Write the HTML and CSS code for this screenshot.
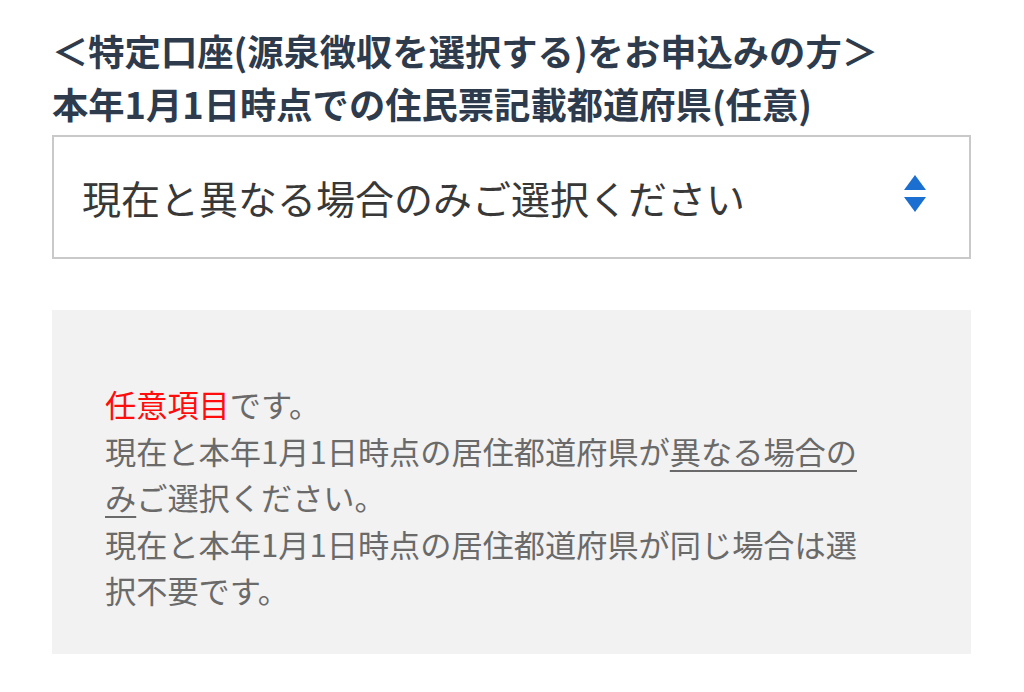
FILE: index.html
```html
<!DOCTYPE html>
<html lang="ja">
<head>
<meta charset="utf-8">
<link rel="stylesheet" href="styles.css">
</head>
<body>
<div class="page">
  <h2 class="title">＜特定口座(源泉徴収を選択する)をお申込みの方＞<br>本年1月1日時点での住民票記載都道府県(任意)</h2>
  <div class="select">
    <span class="select-text">現在と異なる場合のみご選択ください</span>
    <svg class="arrows" width="24" height="38" viewBox="0 0 24 38">
      <polygon points="12,0 23,15 1,15" fill="#1b6fd1"/>
      <polygon points="1,22 23,22 12,37" fill="#1b6fd1"/>
    </svg>
  </div>
  <div class="note">
    <p class="note-text"><span class="red">任意項目</span>です。<br>現在と本年1月1日時点の居住都道府県が<span class="ul">異なる場合のみ</span>ご選択ください。<br>現在と本年1月1日時点の居住都道府県が同じ場合は選択不要です。</p>
  </div>
</div>
</body>
</html>
```
FILE: styles.css
```css
html, body {
  margin: 0;
  padding: 0;
  background: #ffffff;
}
.page {
  padding: 24px 53px 0 52px;
  font-family: "Noto Sans CJK JP", "Noto Sans", sans-serif;
}
.title {
  margin: 0;
  font-size: 36.3px;
  line-height: 53px;
  font-weight: 700;
  color: #2e3b4c;
  letter-spacing: 0;
}
.select {
  margin-top: 5px;
  height: 120px;
  border: 2px solid #c9c9c9;
  display: flex;
  align-items: center;
  justify-content: space-between;
  padding: 0 42px 0 28px;
  background: #fff;
}
.select-text {
  font-size: 39px;
  color: #383838;
  line-height: 1;
}
.arrows {
  display: block;
  margin-bottom: 6px;
}
.note {
  margin-top: 51px;
  background: #f2f2f2;
  padding: 71px 90px 40px 53px;
}
.note-text {
  margin: 0;
  font-size: 31.2px;
  line-height: 46.5px;
  color: #6a6a6a;
}
.red {
  color: #ff0d0d;
}
.ul {
  text-decoration: underline;
  text-decoration-thickness: 2px;
  text-underline-offset: 6px;
}
```
